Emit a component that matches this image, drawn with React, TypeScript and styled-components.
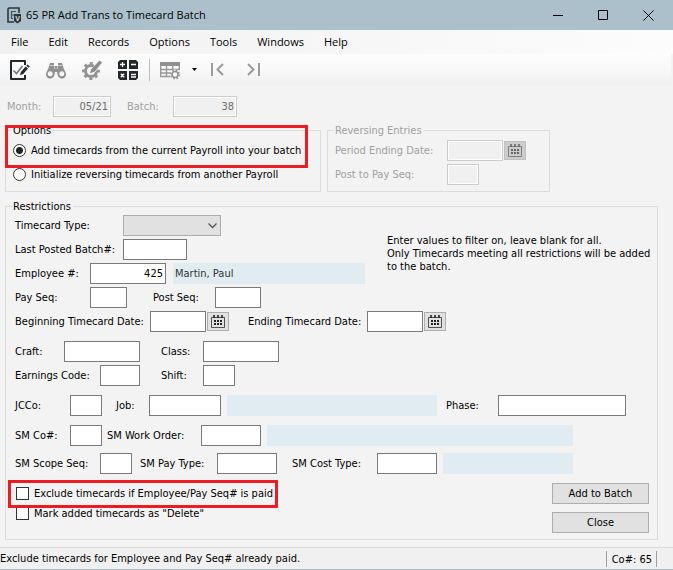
import React, { useState } from "react";
import styled, { createGlobalStyle, css } from "styled-components";

const GlobalStyle = createGlobalStyle`
  *, *::before, *::after { box-sizing: border-box; }
  body { margin: 0; background: #f3f3f3; }
  button, input, select { font: inherit; color: inherit; margin: 0; }
`;

const formFont = `"DejaVu Sans Condensed", "DejaVu Sans", Tahoma, sans-serif`;
const chromeFont = `"Open Sans", "Segoe UI", sans-serif`;

const Window = styled.div`
  display: flex;
  flex-direction: column;
  min-height: 100vh;
  background: #f3f3f3;
  border-bottom: 2px solid #abbfca;
  color: #000;
  font: 11px/13px ${formFont};
`;

const TitleBar = styled.header`
  display: flex;
  align-items: center;
  height: 30px;
  padding: 0 2px 0 7px;
  background: #abc0cb;
  font: 11px/16px ${chromeFont};
`;

const Title = styled.h1`
  flex: 1;
  margin: 0 0 0 4px;
  font: inherit;
  white-space: nowrap;
`;

const WindowButton = styled.button`
  display: flex;
  align-items: center;
  justify-content: center;
  width: 45px;
  height: 28px;
  padding: 0;
  border: 0;
  background: none;
`;

const MenuBar = styled.nav`
  display: flex;
  align-items: center;
  gap: 20px;
  height: 24px;
  padding-left: 11px;
  background: linear-gradient(90deg, #f1f1f1, #fcfcfc);
  font: 11px/16px ${chromeFont};
`;

const MenuItem = styled.button`
  padding: 0;
  border: 0;
  background: none;
`;

const Toolbar = styled.div`
  display: flex;
  align-items: center;
  height: 31px;
  padding-left: 9px;
  margin-right: 2px;
  background: linear-gradient(#fdfdfd, #f7f7f7 60%, #f0f0f0);
`;

const ToolButton = styled.button<{ $w?: number; $before?: number }>`
  display: flex;
  justify-content: center;
  width: ${(p) => p.$w ?? 22}px;
  margin-left: ${(p) => p.$before ?? 0}px;
  padding: 0;
  border: 0;
  background: none;
`;

const ToolSeparator = styled.span`
  width: 1px;
  height: 22px;
  margin: 0 9px 0 10px;
  background: #bdbdbd;
`;

const Form = styled.main`
  display: flex;
  flex-direction: column;
  padding: 11px 15px 7px 5px;
`;

const HeaderRow = styled.div`
  display: flex;
  align-items: center;
  padding-left: 2px;
  margin-bottom: 7px;
  color: #a0a0a0;
`;

const GroupPair = styled.div`
  display: grid;
  grid-template-columns: 316px 223px;
  gap: 6px;
  margin-bottom: 8px;
`;

const Group = styled.fieldset`
  display: block;
  min-width: 0;
  margin: 0;
  padding: 0;
  border: 1px solid #dcdcdc;
  &:disabled { color: #a0a0a0; }
`;

const Legend = styled.legend`
  height: 13px;
  margin-left: 6px;
  padding: 0 2px 0 1px;
`;

const GroupBody = styled.div`
  display: flex;
  flex-direction: column;
  gap: 3px;
  padding: 3px 7px 6px;
`;

const RestrictionsBody = styled.div`
  display: flex;
  flex-direction: column;
  gap: 9px;
  padding: 2px 8px 6px 9px;
`;

const RowBlock = styled.div<{ $gap?: number }>`
  display: flex;
  flex-direction: column;
  gap: ${(p) => p.$gap ?? 3}px;
`;

const FilterIntro = styled.div`
  display: flex;
  gap: 22px;
`;

const FilterRows = styled(RowBlock)`
  flex: 0 0 350px;
`;

const HelpText = styled.p`
  flex: 1;
  margin: 0;
  padding-top: 19px;
  white-space: nowrap;
`;

const Row = styled.div<{ $end?: number }>`
  display: flex;
  align-items: center;
  height: 21px;
  padding-right: ${(p) => p.$end ?? 0}px;
`;

const Label = styled.label<{ $w: number; $before?: number }>`
  flex: 0 0 ${(p) => p.$w}px;
  margin-left: ${(p) => p.$before ?? 0}px;
  white-space: nowrap;
`;

const TextBox = styled.input<{ $w: number }>`
  flex: 0 0 ${(p) => p.$w}px;
  width: ${(p) => p.$w}px;
  height: 21px;
  padding: 0 2px 1px;
  border: 1px solid #7a7a7a;
  border-radius: 0;
  background: #fff;
  text-align: right;
  &:focus { outline: none; }
  &:disabled {
    border-color: #ccc;
    background: #f0f0f0;
    box-shadow: inset 0 0 0 1px #fff;
    color: #6d6d6d;
  }
`;

const Readout = styled.output<{ $before: number }>`
  flex: 1;
  height: 21px;
  margin-left: ${(p) => p.$before}px;
  padding: 4px 2px;
  background: #e1ecf2;
  color: #333;
`;

const SelectWrap = styled.div`
  position: relative;
  width: 98px;
  height: 21px;
`;

const Select = styled.select`
  appearance: none;
  width: 100%;
  height: 100%;
  padding: 0 20px 0 3px;
  border: 1px solid #adadad;
  border-radius: 0;
  background: #e1e1e1;
`;

const SelectArrow = styled.svg`
  position: absolute;
  top: 8px;
  right: 4px;
  pointer-events: none;
`;

const IconButton = styled.button`
  display: flex;
  align-items: center;
  justify-content: center;
  flex: none;
  width: 22px;
  height: 19px;
  margin-left: 1px;
  padding: 0;
  border: 1px solid #adadad;
  background: #e1e1e1;
  color: #222;
  &:disabled {
    border-color: #bfbfbf;
    background: #ccc;
    color: #666;
  }
`;

const highlight = css`
  &::after {
    content: "";
    position: absolute;
    border: 3px solid #ed1c24;
    pointer-events: none;
  }
`;

const RadioRow = styled.label<{ $highlight?: boolean }>`
  position: relative;
  display: flex;
  align-items: center;
  gap: 5px;
  height: 21px;
  white-space: nowrap;
  ${(p) => p.$highlight && highlight}
  &::after { inset: -15px 5px -7px -8px; z-index: 1; }
`;

const CheckRow = styled.label<{ $highlight?: boolean }>`
  position: relative;
  display: flex;
  align-items: center;
  gap: 5px;
  height: 13px;
  white-space: nowrap;
  ${(p) => p.$highlight && highlight}
  &::after { inset: -7px -5px -8px -8px; z-index: 1; }
`;

const Radio = styled.input`
  appearance: none;
  width: 13px;
  height: 13px;
  border: 1px solid #333;
  border-radius: 50%;
  background: #fff;
  &:checked { background: radial-gradient(circle, #222 3px, #fff 4px); }
`;

const CheckBox = styled.input`
  appearance: none;
  width: 13px;
  height: 13px;
  border: 1px solid #333;
  background: #fff;
  &:checked { background: #333; box-shadow: inset 0 0 0 2px #fff; }
`;

const Footer = styled.div`
  display: flex;
  justify-content: space-between;
`;

const Checks = styled.div`
  display: flex;
  flex-direction: column;
  align-items: flex-start;
  gap: 7px;
  padding: 4px 0 0 1px;
`;

const Actions = styled.div`
  display: flex;
  flex-direction: column;
  gap: 8px;
`;

const ActionButton = styled.button`
  width: 97px;
  height: 21px;
  padding: 0;
  border: 1px solid #adadad;
  background: #e1e1e1;
`;

const StatusBar = styled.footer`
  display: flex;
  align-items: center;
  height: 22px;
  margin-top: auto;
  padding-right: 16px;
  border-top: 1px solid #d7d7d7;
  background: #f0f0f0;
`;

const StatusText = styled.span`
  flex: 1;
`;

const StatusCell = styled.span`
  height: 16px;
  padding: 2px 4px 0 5px;
  border: solid #a0a0a0;
  border-width: 0 1px;
`;

const AppIcon = () => (
  <svg width="15" height="17" viewBox="0 0 15 17" fill="none" aria-hidden="true">
    <path d="M12 6V1H2L1 2V15H7" stroke="#2c3439" strokeWidth="1.6" />
    <path d="M4 4.5H9M4.500 4.500V11.500M4 8H7M4 11.500H6" stroke="#46525a" strokeWidth="1.2" />
    <path d="M7 7H14V14L10.500 16.500L7 14Z" fill="#2c3439" />
    <text x="10.500" y="14" textAnchor="middle" fontSize="7" fontWeight="700" fontFamily="Liberation Sans, sans-serif" fill="#dfe9ee">V</text>
  </svg>
);

const MinimizeIcon = () => (
  <svg width="11" height="11" viewBox="0 0 11 11" aria-hidden="true"><path d="M0 5.500H10" stroke="#000" /></svg>
);
const MaximizeIcon = () => (
  <svg width="11" height="11" viewBox="0 0 11 11" aria-hidden="true"><path d="M.5.5H9.500V9.500H.5Z" fill="none" stroke="#000" /></svg>
);
const CloseIcon = () => (
  <svg width="11" height="11" viewBox="0 0 11 11" aria-hidden="true"><path d="M.5.5L10.500 10.500M10.500.5L.5 10.500" stroke="#000" /></svg>
);

const ValidateIcon = () => (
  <svg width="20" height="20" viewBox="0 0 20 20" fill="none" aria-hidden="true">
    <path d="M15 5V1H1V19H15V15" stroke="#23282c" strokeWidth="2" strokeLinejoin="round" />
    <path d="M3.500 10.500L6.500 13.500L12.500 6" stroke="#777" strokeWidth="1.6" />
    <path d="M17.500 4.500L19.800 6.600L18.700 7.800L16.300 5.700ZM15.600 6.500L18 8.600L13.200 14L10 15.300L10.900 12Z" fill="#23282c" />
  </svg>
);

const BinocularsIcon = () => (
  <svg width="20" height="20" viewBox="0 0 20 20" aria-hidden="true">
    <path d="M4 3H8V6H12V3H16L17.500 8L20 13.500A4.200 4.200 0 0 1 11.600 15L11 12H9L8.400 15A4.200 4.200 0 0 1 0 13.500L2.500 8Z" fill="#8f8f8f" />
    <circle cx="4.200" cy="13.800" r="2.500" fill="#f8f8f8" />
    <circle cx="15.800" cy="13.800" r="2.500" fill="#f8f8f8" />
    <path d="M8.500 6V9M11.500 6V9M3.500 5.500H8M12 5.500H16.500" stroke="#d5d5d5" strokeWidth=".8" />
  </svg>
);

const GearPencilIcon = () => (
  <svg width="20" height="20" viewBox="0 0 20 20" fill="none" aria-hidden="true">
    <circle cx="9" cy="11" r="5.500" stroke="#939393" strokeWidth="3" />
    <circle cx="9" cy="11" r="7.700" stroke="#939393" strokeWidth="2.400" strokeDasharray="3 3.047" strokeDashoffset="1.500" />
    <path d="M11 11L19 1" stroke="#f8f8f8" strokeWidth="5" />
    <path d="M17.500 .5L20 2.600L12.800 11.500L8 13.200L9.200 9.200Z" fill="#8b8b8b" />
  </svg>
);

const CalculatorIcon = () => (
  <svg width="20" height="20" viewBox="0 0 20 20" aria-hidden="true">
    <path d="M2 0H9V9H0V2ZM11 0H18L20 2V9H11ZM0 11H9V20H2L0 18ZM11 11H20V18L18 20H11Z" fill="#22272b" />
    <path d="M2 4.500H7M4.500 2V7M13 4.500H18M13 14.500H18M13 17H18M2.800 13.800L6.200 17.200M6.200 13.800L2.800 17.200" stroke="#fff" strokeWidth="1.300" />
  </svg>
);

const TableGearIcon = () => (
  <svg width="20" height="20" viewBox="0 0 20 20" fill="none" aria-hidden="true">
    <path d="M0 2H20V6H0Z" fill="#909090" />
    <path d="M.7 5V16.500H10M.7 9.500H19.300V5M.7 13H11M6.500 6V16.500M12.700 6V11" stroke="#969696" strokeWidth="1.300" />
    <circle cx="15" cy="14.500" r="5" fill="#f8f8f8" />
    <circle cx="15" cy="14.500" r="3" stroke="#8f8f8f" strokeWidth="1.500" />
    <circle cx="15" cy="14.500" r="4.400" stroke="#8f8f8f" strokeWidth="1.300" strokeDasharray="1.700 1.756" />
  </svg>
);

const CaretIcon = () => (
  <svg width="5" height="3" viewBox="0 0 5 3" aria-hidden="true"><path d="M0 0H5L2.500 3Z" fill="#000" /></svg>
);
const FirstIcon = () => (
  <svg width="13" height="13" viewBox="0 0 13 13" fill="none" stroke="#9b9b9b" strokeWidth="2" aria-hidden="true">
    <path d="M1 0V13M12 1L6.500 6.500L12 12" />
  </svg>
);
const LastIcon = () => (
  <svg width="13" height="13" viewBox="0 0 13 13" fill="none" stroke="#9b9b9b" strokeWidth="2" aria-hidden="true">
    <path d="M12 0V13M1 1L6.500 6.500L1 12" />
  </svg>
);

const CalendarIcon = () => (
  <svg width="14" height="13" viewBox="0 0 14 13" fill="none" aria-hidden="true">
    <path d="M.5 2.500H13.500V12.500H.5Z" stroke="currentColor" strokeOpacity=".75" />
    <path d="M2 0H4V3H2ZM6 0H8V3H6ZM10 0H12V3H10Z" fill="currentColor" fillOpacity=".8" />
    <path d="M3 5H5V7H3ZM6 5H8V7H6ZM9 5H11V7H9ZM3 8H5V10H3ZM6 8H8V10H6ZM9 8H11V10H9Z" fill="currentColor" />
  </svg>
);

type FieldProps = {
  id: string;
  label: string;
  labelWidth: number;
  width: number;
  before?: number;
  value?: string;
  disabled?: boolean;
};

const Field = ({ id, label, labelWidth, width, before, value, disabled }: FieldProps) => (
  <>
    <Label htmlFor={id} $w={labelWidth} $before={before}>{label}</Label>
    <TextBox id={id} $w={width} defaultValue={value} disabled={disabled} />
  </>
);

const DateField = (props: FieldProps) => (
  <>
    <Field {...props} />
    <IconButton type="button" disabled={props.disabled} aria-label={`Pick date, ${props.label}`}>
      <CalendarIcon />
    </IconButton>
  </>
);

const menus = ["File", "Edit", "Records", "Options", "Tools", "Windows", "Help"];

export default function App() {
  const [source, setSource] = useState("current");

  return (
    <Window>
      <GlobalStyle />
      <TitleBar>
        <AppIcon />
        <Title>65 PR Add Trans to Timecard Batch</Title>
        <WindowButton aria-label="Minimize"><MinimizeIcon /></WindowButton>
        <WindowButton aria-label="Maximize"><MaximizeIcon /></WindowButton>
        <WindowButton aria-label="Close window"><CloseIcon /></WindowButton>
      </TitleBar>
      <MenuBar>
        {menus.map((m) => <MenuItem key={m}>{m}</MenuItem>)}
      </MenuBar>
      <Toolbar role="toolbar">
        <ToolButton aria-label="Validate"><ValidateIcon /></ToolButton>
        <ToolButton aria-label="Find" $before={14}><BinocularsIcon /></ToolButton>
        <ToolButton aria-label="Edit settings" $before={14}><GearPencilIcon /></ToolButton>
        <ToolButton aria-label="Calculator" $before={14}><CalculatorIcon /></ToolButton>
        <ToolSeparator />
        <ToolButton aria-label="Grid settings"><TableGearIcon /></ToolButton>
        <ToolButton aria-label="Grid options" $w={15} $before={6}><CaretIcon /></ToolButton>
        <ToolButton aria-label="First record" $before={4}><FirstIcon /></ToolButton>
        <ToolButton aria-label="Last record" $before={14}><LastIcon /></ToolButton>
      </Toolbar>

      <Form>
        <HeaderRow>
          <Field id="month" label="Month:" labelWidth={46} width={58} value="05/21" disabled />
          <Field id="batch" label="Batch:" labelWidth={46} width={64} value="38" before={16} disabled />
        </HeaderRow>

        <GroupPair>
          <Group>
            <Legend>Options</Legend>
            <GroupBody>
              <RadioRow $highlight>
                <Radio type="radio" name="source" checked={source === "current"} onChange={() => setSource("current")} />
                Add timecards from the current Payroll into your batch
              </RadioRow>
              <RadioRow>
                <Radio type="radio" name="source" checked={source === "another"} onChange={() => setSource("another")} />
                Initialize reversing timecards from another Payroll
              </RadioRow>
            </GroupBody>
          </Group>
          <Group disabled>
            <Legend>Reversing Entries</Legend>
            <GroupBody>
              <Row><DateField id="period" label="Period Ending Date:" labelWidth={112} width={56} disabled /></Row>
              <Row><Field id="postTo" label="Post to Pay Seq:" labelWidth={112} width={32} disabled /></Row>
            </GroupBody>
          </Group>
        </GroupPair>

        <Group>
          <Legend>Restrictions</Legend>
          <RestrictionsBody>
            <RowBlock>
              <FilterIntro>
                <FilterRows>
                  <Row>
                    <Label htmlFor="type" $w={108}>Timecard Type:</Label>
                    <SelectWrap>
                      <Select id="type"><option value="" /></Select>
                      <SelectArrow width="9" height="6" viewBox="0 0 9 6" fill="none" stroke="#555" strokeWidth="1.300">
                        <path d="M.5.5L4.500 4.500L8.500.5" />
                      </SelectArrow>
                    </SelectWrap>
                  </Row>
                  <Row><Field id="lastBatch" label="Last Posted Batch#:" labelWidth={108} width={64} /></Row>
                  <Row>
                    <Field id="employee" label="Employee #:" labelWidth={75} width={76} value="425" />
                    <Readout htmlFor="employee" $before={7}>Martin, Paul</Readout>
                  </Row>
                  <Row>
                    <Field id="paySeq" label="Pay Seq:" labelWidth={75} width={37} />
                    <Field id="postSeq" label="Post Seq:" labelWidth={62} width={46} before={26} />
                  </Row>
                </FilterRows>
                <HelpText>
                  Enter values to filter on, leave blank for all.<br />
                  Only Timecards meeting all restrictions will be added<br />
                  to the batch.
                </HelpText>
              </FilterIntro>
              <Row>
                <DateField id="begin" label="Beginning Timecard Date:" labelWidth={135} width={56} />
                <DateField id="end" label="Ending Timecard Date:" labelWidth={119} width={56} before={19} />
              </Row>
            </RowBlock>

            <RowBlock>
              <Row>
                <Field id="craft" label="Craft:" labelWidth={49} width={76} />
                <Field id="class" label="Class:" labelWidth={42} width={76} before={21} />
              </Row>
              <Row>
                <Field id="earnings" label="Earnings Code:" labelWidth={85} width={40} />
                <Field id="shift" label="Shift:" labelWidth={42} width={32} before={21} />
              </Row>
            </RowBlock>

            <Row $end={23}>
              <Field id="jcco" label="JCCo:" labelWidth={55} width={32} />
              <Field id="job" label="Job:" labelWidth={33} width={72} before={14} />
              <Readout htmlFor="job" $before={6} />
              <Field id="phase" label="Phase:" labelWidth={52} width={128} before={9} />
            </Row>

            <RowBlock $gap={7}>
              <Row $end={76}>
                <Field id="smco" label="SM Co#:" labelWidth={55} width={32} />
                <Field id="workOrder" label="SM Work Order:" labelWidth={94} width={60} before={5} />
                <Readout htmlFor="workOrder" $before={6} />
              </Row>
              <Row $end={76}>
                <Field id="scope" label="SM Scope Seq:" labelWidth={85} width={32} />
                <Field id="payType" label="SM Pay Type:" labelWidth={77} width={60} before={8} />
                <Field id="costType" label="SM Cost Type:" labelWidth={85} width={60} before={15} />
                <Readout htmlFor="costType" $before={6} />
              </Row>
            </RowBlock>

            <Footer>
              <Checks>
                <CheckRow $highlight>
                  <CheckBox type="checkbox" />
                  Exclude timecards if Employee/Pay Seq# is paid
                </CheckRow>
                <CheckRow>
                  <CheckBox type="checkbox" />
                  Mark added timecards as "Delete"
                </CheckRow>
              </Checks>
              <Actions>
                <ActionButton type="button">Add to Batch</ActionButton>
                <ActionButton type="button">Close</ActionButton>
              </Actions>
            </Footer>
          </RestrictionsBody>
        </Group>
      </Form>

      <StatusBar>
        <StatusText>Exclude timecards for Employee and Pay Seq# already paid.</StatusText>
        <StatusCell>Co#: 65</StatusCell>
      </StatusBar>
    </Window>
  );
}
